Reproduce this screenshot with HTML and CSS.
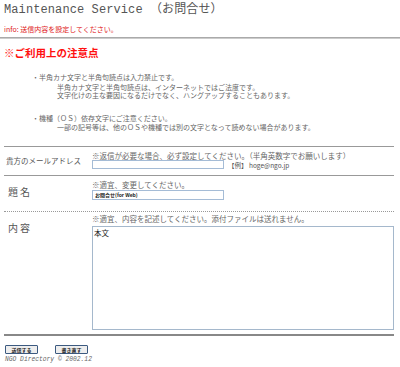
FILE: index.html
```html
<!DOCTYPE html>
<html lang="ja">
<head>
    <meta charset="UTF-8">
    <title>Maintenance Service</title>
    <link rel="stylesheet" href="styles.css">
</head>
<body>
    <h1 class="title">Maintenance Service （お問合せ）</h1>
    <p class="info">info: 送信内容を設定してください。</p>
    <hr class="top-rule">

    <h2 class="notice-head">※ご利用上の注意点</h2>
    <div class="notice">
        <p class="bullet">・半角カナ文字と半角句読点は入力禁止です。</p>
        <p class="detail">半角カナ文字と半角句読点は、インターネットではご法度です。<br>文字化けの主な要因になるだけでなく、ハングアップすることもあります。</p>
        <p class="bullet gap">・機種（ＯＳ）依存文字にご注意ください。</p>
        <p class="detail">一部の記号等は、他のＯＳや機種では別の文字となって読めない場合があります。</p>
    </div>

    <form class="mail-form" onsubmit="return false;">
        <div class="row row-mail">
            <div class="label small">貴方のメールアドレス</div>
            <div class="field">
                <div class="hint">※返信が必要な場合、必ず設定してください。（半角英数字でお願いします）</div>
                <div class="line">
                    <input type="text" class="text-in">
                    <span class="example">【例】 hoge@ngo.jp</span>
                </div>
            </div>
        </div>
        <div class="row row-subject">
            <div class="label big">題名</div>
            <div class="field">
                <div class="hint">※適宜、変更してください。</div>
                <input type="text" class="text-in subject" value="お問合せ(for Web)">
            </div>
        </div>
        <div class="row row-body dotted">
            <div class="label big body-label">内容</div>
            <div class="field">
                <div class="hint">※適宜、内容を記述してください。添付ファイルは送れません。</div>
                <textarea class="body-in">本文</textarea>
            </div>
        </div>
        <div class="buttons">
            <button type="submit">送信する</button>
            <button type="reset">書き直す</button>
        </div>
    </form>
    <p class="footer">NGO Directory © 2002.12</p>
</body>
</html>
```

FILE: styles.css
```css
body {
    margin: 0;
    padding: 0 4px;
    background-color: #fff;
    font-family: "Noto Sans CJK JP", "Liberation Sans", sans-serif;
    color: #555;
}
.title {
    margin: 3px 0 0;
    font-family: "Liberation Mono", "Noto Sans CJK JP", monospace;
    font-size: 12px;
    font-weight: normal;
    line-height: 14px;
    letter-spacing: 0.1px;
    color: #555;
}
.info {
    margin: 8px 0 0;
    font-size: 7px;
    line-height: 8px;
    color: #e02020;
}
.top-rule {
    margin: 4px -4px 0;
    border: 0;
    border-top: 1px solid #aaa;
    border-bottom: 1px solid #ccc;
}
.notice-head {
    margin: 8px 0 0;
    font-size: 10.5px;
    line-height: 12px;
    font-weight: bold;
    color: #ff1010;
}
.notice {
    margin: 14px 0 0 28px;
    font-size: 7px;
    line-height: 8.5px;
    color: #666;
}
.notice p {
    margin: 0;
}
.notice .detail {
    margin: 1px 0 0 25px;
}
.notice .gap {
    margin-top: 14px;
}
.mail-form {
    margin: 14px 0 0;
    width: 390px;
}
.row {
    display: flex;
    border-top: 1px solid #999;
}
.row.dotted {
    border-top: 1px dotted #999;
}
.row-mail {
    padding: 4px 0 6px;
}
.row-subject {
    padding: 4px 0 11px;
}
.row-body {
    padding: 2px 0 4px;
}
.label {
    width: 86px;
    padding-left: 2px;
}
.label.small {
    font-size: 7.5px;
    line-height: 9px;
    padding-top: 5px;
}
.label.big {
    font-size: 10px;
    line-height: 12px;
    letter-spacing: 2px;
    padding-top: 6px;
    padding-left: 4px;
    width: 84px;
}
.label.body-label {
    padding-top: 8px;
}
.field {
    flex: 1;
    font-size: 7.5px;
    line-height: 9px;
}
.hint {
    color: #666;
}
.line {
    display: flex;
    align-items: flex-end;
    gap: 4px;
}
.text-in {
    box-sizing: border-box;
    width: 132px;
    height: 9px;
    margin: 0;
    padding: 0 2px;
    border: 1px solid #a5bcd6;
    font-family: "Noto Sans CJK JP", sans-serif;
    font-size: 5px;
    font-weight: bold;
    color: #222;
}
.subject {
    height: 10px;
    margin-top: 1px;
}
.example {
    font-size: 6.5px;
    line-height: 8px;
}
.body-in {
    display: block;
    box-sizing: border-box;
    width: 302px;
    height: 104px;
    margin: 3px 0 0;
    padding: 1px;
    border: 1px solid #a5b8cc;
    font-family: "Noto Sans CJK JP", sans-serif;
    font-size: 7.5px;
    line-height: 9px;
    color: #222;
    resize: none;
}
.buttons {
    border-top: 2px solid #888;
    padding: 9px 0 0 1px;
    display: flex;
    gap: 17px;
}
button {
    box-sizing: border-box;
    width: 33px;
    height: 9px;
    padding: 0;
    border: 1px solid #3c5a80;
    border-radius: 1px;
    background-color: #eee;
    font-family: "Noto Sans CJK JP", sans-serif;
    font-size: 5px;
    line-height: 7px;
    font-weight: bold;
    color: #222;
}
.footer {
    margin: 2px 0 0 1px;
    font-family: "Liberation Mono", monospace;
    font-style: italic;
    font-size: 6.3px;
    line-height: 8px;
    color: #666;
}
```
